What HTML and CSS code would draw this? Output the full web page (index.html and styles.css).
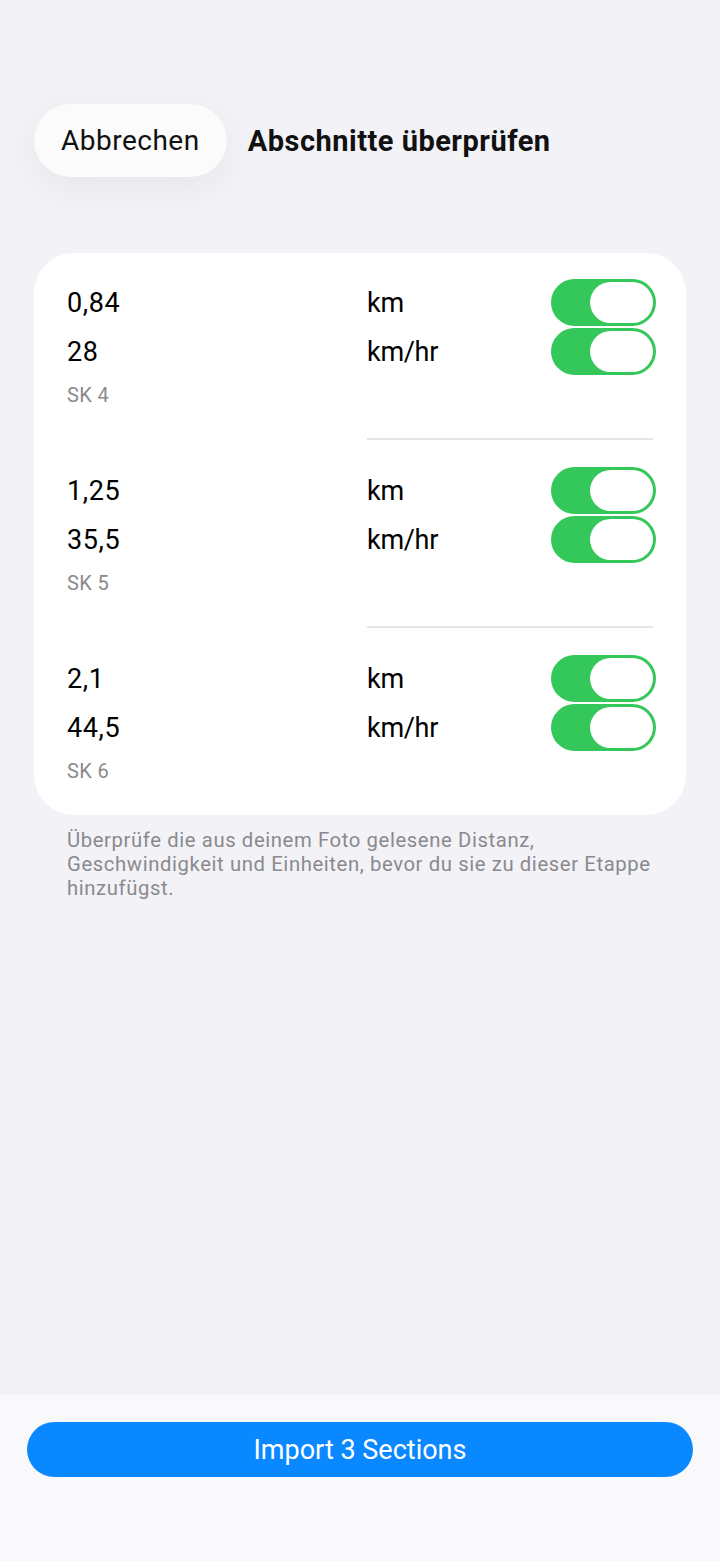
FILE: index.html
```html
<!DOCTYPE html>
<html lang="de">
<head>
<meta charset="utf-8">
<title>Abschnitte überprüfen</title>
<link rel="stylesheet" href="styles.css">
</head>
<body>
<div class="screen">
  <header class="header">
    <button class="cancel">Abbrechen</button>
    <h1 class="title">Abschnitte überprüfen</h1>
  </header>

  <section class="card">
    <div class="group">
      <div class="row"><span class="value">0,84</span><span class="unit">km</span><span class="toggle"><span class="knob"></span></span></div>
      <div class="row"><span class="value">28</span><span class="unit">km/hr</span><span class="toggle"><span class="knob"></span></span></div>
      <div class="label">SK 4</div>
    </div>
    <div class="divider"></div>
    <div class="group">
      <div class="row"><span class="value">1,25</span><span class="unit">km</span><span class="toggle"><span class="knob"></span></span></div>
      <div class="row"><span class="value">35,5</span><span class="unit">km/hr</span><span class="toggle"><span class="knob"></span></span></div>
      <div class="label">SK 5</div>
    </div>
    <div class="divider"></div>
    <div class="group">
      <div class="row"><span class="value">2,1</span><span class="unit">km</span><span class="toggle"><span class="knob"></span></span></div>
      <div class="row"><span class="value">44,5</span><span class="unit">km/hr</span><span class="toggle"><span class="knob"></span></span></div>
      <div class="label">SK 6</div>
    </div>
  </section>

  <p class="note">Überprüfe die aus deinem Foto gelesene Distanz, Geschwindigkeit und Einheiten, bevor du sie zu dieser Etappe hinzufügst.</p>

  <footer class="bottom">
    <button class="import">Import 3 Sections</button>
  </footer>
</div>
</body>
</html>
```

FILE: styles.css
```css
* { box-sizing: border-box; }
html, body { margin: 0; padding: 0; }
body {
  background: #f2f2f7;
  font-family: Roboto, "Liberation Sans", sans-serif;
  color: #000;
}
.screen {
  min-height: 1561px;
  display: flex;
  flex-direction: column;
}
.header {
  display: flex;
  align-items: center;
  gap: 21px;
  padding: 104px 0 0 34px;
}
.cancel {
  height: 73px;
  padding: 0 27px;
  border: none;
  border-radius: 37px;
  background: #fbfbfc;
  font-family: inherit;
  font-size: 28px;
  letter-spacing: 0.5px;
  color: #111;
  box-shadow: 0 10px 40px rgba(0, 0, 0, 0.06);
}
.title {
  margin: 0;
  font-size: 29px;
  font-weight: 700;
  letter-spacing: 0.5px;
  color: #111;
}
.card {
  margin: 76px 34px 0;
  background: #fff;
  border-radius: 40px;
  padding: 25px 30px 32px 33px;
}
.row {
  display: grid;
  grid-template-columns: 300px 1fr auto;
  align-items: center;
  height: 49px;
  font-size: 27px;
}
.value { letter-spacing: 0.6px; }
.unit { letter-spacing: -0.3px; }
.toggle {
  width: 105px;
  height: 47px;
  border-radius: 24px;
  background: #34c759;
  padding: 3px;
  display: flex;
  justify-content: flex-end;
}
.knob {
  width: 63px;
  height: 41px;
  border-radius: 21px;
  background: #fff;
}
.label {
  height: 24px;
  line-height: 24px;
  font-size: 20px;
  letter-spacing: 0.4px;
  color: #8a8a8e;
  margin-top: 7px;
}
.divider {
  height: 2px;
  background: #e5e5ea;
  margin: 31px 3px 26px 300px;
}
.note {
  width: 602px;
  margin: 13px 0 0 67px;
  font-size: 20.3px;
  letter-spacing: 0.6px;
  line-height: 24px;
  color: #8a8a8e;
}
.bottom {
  margin-top: auto;
  height: 166px;
  background: #f9f9fb;
  padding: 27px 27px 0;
}
.import {
  width: 100%;
  height: 55px;
  border: none;
  border-radius: 28px;
  background: #0a88ff;
  color: #fff;
  font-family: inherit;
  font-size: 27px;
}
```
